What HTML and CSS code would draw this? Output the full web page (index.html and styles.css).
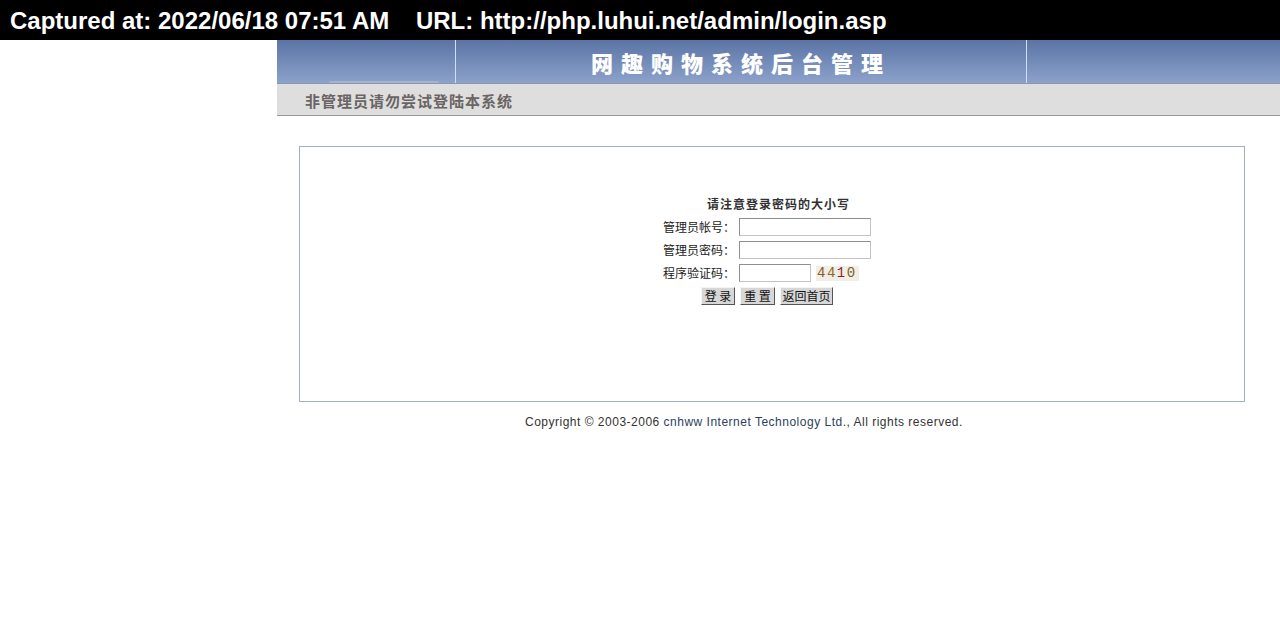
FILE: index.html
```html
<!DOCTYPE html>
<html lang="zh-CN">
<head>
  <meta charset="UTF-8" />
  <title>网趣购物系统后台管理</title>
  <link rel="stylesheet" href="styles.css">
</head>
<body>
<div class="capture-bar">
  <span>Captured at: 2022/06/18 07:51 AM</span>
  <span class="url">URL: http://php.luhui.net/admin/login.asp</span>
</div>

<div class="page">
  <div class="banner">
    <div class="banner-left"><i class="tab"></i></div>
    <div class="banner-mid"><h1>网趣购物系统后台管理</h1></div>
    <div class="banner-right"></div>
  </div>

  <div class="notice">非管理员请勿尝试登陆本系统</div>

  <div class="login-box">
    <form class="login-form" onsubmit="return false">
      <div class="tip">请注意登录密码的大小写</div>
      <table>
        <tr>
          <td class="lbl">管理员帐号：</td>
          <td><div class="field"><input type="text" class="txt" name="username" /></div></td>
        </tr>
        <tr>
          <td class="lbl">管理员密码：</td>
          <td><div class="field"><input type="password" class="txt" name="password" /></div></td>
        </tr>
        <tr>
          <td class="lbl">程序验证码：</td>
          <td>
            <div class="field">
              <input type="text" class="txt short" name="verifycode" />
              <span class="code"><b class="c1">4</b><b class="c2">4</b><b class="c3">1</b><b class="c4">0</b></span>
            </div>
          </td>
        </tr>
      </table>
      <div class="actions">
        <button type="submit" class="btn-login">登&nbsp;录</button>
        <button type="reset" class="btn-reset">重&nbsp;置</button>
        <button type="button" class="btn-home">返回首页</button>
      </div>
    </form>
  </div>

  <div class="copyright">
    Copyright &copy; 2003-2006 <span class="co">cnhww Internet Technology Ltd.</span>, All rights reserved.
  </div>
</div>
</body>
</html>
```

FILE: styles.css
```css
html, body {
  margin: 0;
  padding: 0;
  background: #fff;
  font-family: "Noto Sans CJK SC", "Liberation Sans", sans-serif;
  font-size: 12px;
  color: #222;
}

.capture-bar {
  height: 40px;
  background: #000;
  color: #fff;
  font-family: "Liberation Sans", Arial, sans-serif;
  font-weight: bold;
  font-size: 24px;
  line-height: 42px;
  padding-left: 10px;
  white-space: nowrap;
}

.capture-bar .url {
  margin-left: 20px;
}

.page {
  margin-left: 277px;
}

/* top banner */
.banner {
  display: flex;
  height: 44px;
  background: linear-gradient(#5b74a5, #8ca2cb);
  border-bottom: 1px solid #8a96ad;
  box-sizing: border-box;
}

.banner-left {
  width: 178px;
  position: relative;
}

.banner-left .tab {
  position: absolute;
  left: 52px;
  bottom: 0;
  width: 110px;
  height: 2px;
  border-radius: 3px 3px 0 0;
  background: #a4b3d0;
}

.banner-mid {
  width: 570px;
  border-left: 1px solid #cfe0f6;
  border-right: 1px solid #cfe0f6;
  display: flex;
  justify-content: center;
  align-items: center;
}

.banner-mid h1 {
  margin: 0;
  color: #fff;
  font-family: "Noto Sans CJK SC", sans-serif;
  font-weight: 900;
  font-size: 22px;
  letter-spacing: 8px;
  line-height: 1;
}

.banner-right {
  flex: 1;
}

.notice {
  height: 32px;
  line-height: 34px;
  background: #dedede;
  border-bottom: 1px solid #999;
  box-sizing: border-box;
  padding-left: 28px;
  font-size: 15px;
  font-weight: bold;
  letter-spacing: 1px;
  color: #6a6464;
}

/* login panel */
.login-box {
  margin: 30px 35px 0 22px;
  height: 256px;
  border: 1px solid #a3b1c2;
  box-sizing: border-box;
  padding-top: 49px;
}

.login-form {
  width: 232px;
  margin: 0 auto;
  padding: 0 7px 0 17px;
}

.tip {
  text-align: right;
  padding-right: 43px;
  font-weight: bold;
  font-size: 12px;
  letter-spacing: 1px;
  line-height: 16px;
  color: #333;
}

.login-form table {
  border-collapse: collapse;
  margin-top: 6px;
}

.login-form td {
  padding: 0 0 5px 0;
  line-height: 18px;
  white-space: nowrap;
  vertical-align: middle;
}

.login-form td.lbl {
  text-align: right;
  padding-right: 4px;
  width: 74px;
}

.field {
  display: flex;
  align-items: center;
  height: 18px;
}

.txt {
  display: block;
  width: 132px;
  height: 18px;
  box-sizing: border-box;
  border: 1px solid #8f8f8f;
  border-bottom-color: #c4c4c4;
  border-right-color: #c4c4c4;
  padding: 0 2px;
  margin: 0;
  font-size: 12px;
}

.txt.short {
  width: 72px;
}

.code {
  margin-left: 5px;
  padding: 0 2px 0 1px;
  background: #f1ede7;
  font-family: "Liberation Mono", monospace;
  font-size: 14px;
  line-height: 15px;
  letter-spacing: 1.5px;
}

.code b { font-weight: normal; }
.code .c1 { color: #8a5a22; }
.code .c2 { color: #8c6a1a; }
.code .c3 { color: #a3181c; }
.code .c4 { color: #7a6420; }

.actions {
  display: flex;
  gap: 5px;
  padding-left: 40px;
}

.actions button {
  height: 18px;
  padding: 0;
  margin: 0;
  font-family: "Noto Sans CJK SC", sans-serif;
  font-size: 12px;
  line-height: 14px;
  color: #111;
  background: #d7d7d7;
  border: 1px solid;
  border-color: #f4f4f4 #555 #555 #f4f4f4;
  cursor: pointer;
}

.actions .btn-login { width: 34px; }
.actions .btn-reset { width: 35px; }
.actions .btn-home { width: 53px; }

.copyright {
  margin-top: 13px;
  padding-left: 248px;
  font-family: "Liberation Sans", sans-serif;
  font-size: 12px;
  letter-spacing: 0.5px;
  color: #333;
}

.copyright .co {
  color: #2d3e5c;
}
```
